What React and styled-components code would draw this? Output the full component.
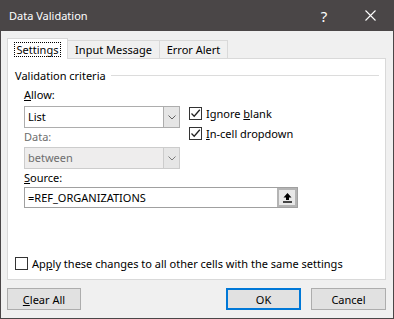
import React from 'react'
import styled, { createGlobalStyle } from 'styled-components'

const FONT = `"Segoe UI", "Noto Sans", sans-serif`

const GlobalStyle = createGlobalStyle`
  html, body {
    margin: 0;
    padding: 0;
    background: #f0f0f0;
  }
  body {
    font-family: ${FONT};
    font-size: 11px;
    color: #000;
  }
  * {
    box-sizing: border-box;
  }
`

const Window = styled.div`
  width: 394px;
  height: 319px;
  display: flex;
  flex-direction: column;
  background: #f0f0f0;
  border: 1px solid #4a4647;
  border-top: none;
`
const TitleBar = styled.div`
  height: 31px;
  flex: none;
  display: flex;
  align-items: center;
  background: #4a4647;
  color: #fff;
  padding-left: 8px;
`
const Title = styled.div`
  flex: 1;
  font-size: 11px;
`
const TitleButton = styled.div`
  width: 46px;
  height: 31px;
  display: flex;
  align-items: center;
  justify-content: center;
  font-size: 15px;
  color: #fff;
`
const Body = styled.div`
  flex: 1;
  display: flex;
  flex-direction: column;
  padding: 7px 7px 8px 6px;
`
const TabRow = styled.div`
  display: flex;
  align-items: flex-end;
  height: 21px;
  margin-bottom: -1px;
  position: relative;
  z-index: 1;
`
const Tab = styled.div`
  width: ${p => p.w}px;
  height: ${p => (p.active ? 21 : 19)}px;
  margin-left: ${p => (p.first ? 0 : -1)}px;
  display: flex;
  align-items: center;
  justify-content: center;
  border: 1px solid #d9d9d9;
  border-bottom: ${p => (p.active ? 'none' : '1px solid #d9d9d9')};
  background: ${p => (p.active ? '#fff' : '#f0f0f0')};
  padding-top: ${p => (p.active ? 1 : 0)}px;
`
const FocusText = styled.span`
  outline: 1px dotted #000;
  outline-offset: 0;
  padding: 0 2px;
  line-height: 13px;
`
const Panel = styled.div`
  height: 222px;
  flex: none;
  display: flex;
  flex-direction: column;
  background: #fff;
  border: 1px solid #d9d9d9;
  padding: 8px 0 8px 0;
`
const Legend = styled.div`
  display: flex;
  align-items: center;
  gap: 5px;
  height: 16px;
  padding: 0 6px 0 7px;
`
const LegendLine = styled.div`
  flex: 1;
  height: 1px;
  background: #dcdcdc;
`
const Criteria = styled.div`
  display: flex;
  padding-left: 16px;
  margin-top: 4px;
`
const Column = styled.div`
  width: 156px;
  display: flex;
  flex-direction: column;
`
const Label = styled.div`
  height: 16px;
  line-height: 16px;
  margin-top: ${p => p.mt || 0}px;
  color: ${p => (p.disabled ? '#6d6d6d' : '#000')};
`
const Combo = styled.div`
  height: 22px;
  margin-top: ${p => p.mt || 0}px;
  display: flex;
  border: 1px solid ${p => (p.disabled ? '#cccccc' : '#adadad')};
  background: ${p => (p.disabled ? '#eeeded' : '#fff')};
  color: ${p => (p.disabled ? '#6d6d6d' : '#000')};
`
const ComboText = styled.div`
  flex: 1;
  padding-left: 3px;
  line-height: 20px;
`
const ComboButton = styled.div`
  width: 16px;
  display: flex;
  align-items: center;
  justify-content: center;
  background: ${p => (p.disabled ? '#e6e6e6' : '#e5e5e5')};
  border-left: 1px solid ${p => (p.disabled ? '#cccccc' : '#adadad')};
`
const CheckColumn = styled.div`
  display: flex;
  flex-direction: column;
  margin-left: 9px;
  padding-top: 16px;
`
const CheckRow = styled.div`
  height: 20px;
  display: flex;
  align-items: center;
  gap: 4px;
`
const Box = styled.div`
  width: 13px;
  height: 13px;
  flex: none;
  border: 1px solid #333;
  background: #fff;
  display: flex;
  align-items: center;
  justify-content: center;
`
const SourceBlock = styled.div`
  padding-left: 16px;
  display: flex;
  flex-direction: column;
`
const SourceBox = styled.div`
  width: 274px;
  height: 21px;
  margin-top: 1px;
  display: flex;
  border: 1px solid #a0a0a0;
  background: #fff;
`
const SourceText = styled.div`
  flex: 1;
  padding-left: 3px;
  line-height: 19px;
`
const RefButton = styled.div`
  width: 20px;
  display: flex;
  align-items: center;
  justify-content: center;
  border: 2px solid #b4b4b4;
  background: #e8e8e8;
`
const ApplyRow = styled(CheckRow)`
  margin-top: auto;
  height: 16px;
  padding-left: 7px;
`
const ButtonRow = styled.div`
  display: flex;
  margin-top: 8px;
  gap: 10px;
`
const Button = styled.div`
  width: ${p => p.w || 75}px;
  height: 22px;
  display: flex;
  align-items: center;
  justify-content: center;
  background: #e1e1e1;
  border: ${p => (p.primary ? '2px solid #0078d7' : '1px solid #adadad')};
  margin-right: ${p => (p.push ? 'auto' : 0)};
`

const Chevron = ({ color = '#606060' }) => (
  <svg width="8" height="5" viewBox="0 0 8 5">
    <path d="M0.5 0.5 L4 4 L7.5 0.5" fill="none" stroke={color} strokeWidth="1" />
  </svg>
)

const Check = () => (
  <svg width="11" height="11" viewBox="0 0 11 11">
    <path d="M1.5 5.5 L4.2 8.2 L9.8 1.8" fill="none" stroke="#222" strokeWidth="1.3" />
  </svg>
)

const UpArrow = () => (
  <svg width="11" height="11" viewBox="0 0 11 11">
    <path d="M5.5 1 L1.5 5.5 H4 V8 H7 V5.5 H9.5 Z" fill="#000" />
    <rect x="1" y="9.3" width="9" height="1.4" fill="#000" />
  </svg>
)

const CloseIcon = () => (
  <svg width="11" height="11" viewBox="0 0 11 11">
    <path d="M0.5 0.5 L10.5 10.5 M10.5 0.5 L0.5 10.5" stroke="#fff" strokeWidth="1.1" />
  </svg>
)

export default function App() {
  return (
    <>
      <GlobalStyle />
      <Window>
        <TitleBar>
          <Title>Data Validation</Title>
          <TitleButton>?</TitleButton>
          <TitleButton><CloseIcon /></TitleButton>
        </TitleBar>
        <Body>
          <TabRow>
            <Tab w={61} first active><FocusText>Settings</FocusText></Tab>
            <Tab w={93}>Input Message</Tab>
            <Tab w={69}>Error Alert</Tab>
          </TabRow>
          <Panel>
            <Legend>
              <span>Validation criteria</span>
              <LegendLine />
            </Legend>
            <Criteria>
              <Column>
                <Label><u>A</u>llow:</Label>
                <Combo mt={3}>
                  <ComboText>List</ComboText>
                  <ComboButton><Chevron /></ComboButton>
                </Combo>
                <Label mt={1} disabled>Data:</Label>
                <Combo mt={2} disabled>
                  <ComboText>between</ComboText>
                  <ComboButton disabled><Chevron color="#7a7a7a" /></ComboButton>
                </Combo>
              </Column>
              <CheckColumn>
                <CheckRow>
                  <Box><Check /></Box>
                  <span>Ignore <u>b</u>lank</span>
                </CheckRow>
                <CheckRow>
                  <Box><Check /></Box>
                  <span><u>I</u>n-cell dropdown</span>
                </CheckRow>
              </CheckColumn>
            </Criteria>
            <SourceBlock>
              <Label mt={1}><u>S</u>ource:</Label>
              <SourceBox>
                <SourceText>=REF_ORGANIZATIONS</SourceText>
                <RefButton><UpArrow /></RefButton>
              </SourceBox>
            </SourceBlock>
            <ApplyRow>
              <Box />
              <span>Ap<u>p</u>ly these changes to all other cells with the same settings</span>
            </ApplyRow>
          </Panel>
          <ButtonRow>
            <Button w={74} push><span><u>C</u>lear All</span></Button>
            <Button primary>OK</Button>
            <Button>Cancel</Button>
          </ButtonRow>
        </Body>
      </Window>
    </>
  )
}
